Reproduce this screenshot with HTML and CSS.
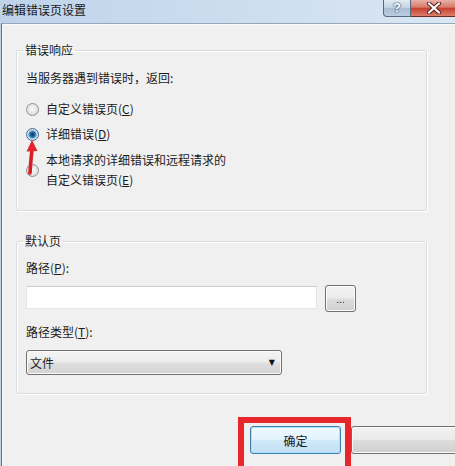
FILE: index.html
```html
<!DOCTYPE html>
<html lang="zh-CN">
<head>
<meta charset="utf-8">
<title>编辑错误页设置</title>
<link rel="stylesheet" href="styles.css">
</head>
<body>
<div class="window">
  <div class="titlebar">
    <div class="title">编辑错误页设置</div>
    <div class="caption-btns">
      <div class="cap-help">?</div>
      <div class="cap-close">
        <svg width="16" height="12" viewBox="0 0 16 12">
          <path d="M3 1.5 L13 10.5 M13 1.5 L3 10.5" stroke="#5a2420" stroke-width="4.2" stroke-linecap="round"/>
          <path d="M3 1.5 L13 10.5 M13 1.5 L3 10.5" stroke="#ffffff" stroke-width="2.2" stroke-linecap="round"/>
        </svg>
      </div>
    </div>
  </div>
  <div class="client">
    <fieldset class="group group-response">
      <legend>错误响应</legend>
      <div class="prompt">当服务器遇到错误时，返回:</div>
      <div class="radio-row row1"><span class="radio"></span><span>自定义错误页(<u>C</u>)</span></div>
      <div class="radio-row row2"><span class="radio checked"></span><span>详细错误(<u>D</u>)</span></div>
      <div class="radio-row row3"><span class="radio"></span><span class="two-line">本地请求的详细错误和远程请求的<br>自定义错误页(<u>E</u>)</span></div>
      <svg class="arrow" width="20" height="40" viewBox="0 0 20 40">
        <path d="M9 34 C9.5 26 10 19 11 11" stroke="#d81e24" stroke-width="3.6" fill="none" stroke-linecap="round"/>
        <polygon points="11,1 16.5,12 5.5,12.5" fill="#e2262b"/>
      </svg>
    </fieldset>
    <fieldset class="group group-default">
      <legend>默认页</legend>
      <div class="label">路径(<u>P</u>):</div>
      <div class="path-row">
        <div class="textbox"></div>
        <div class="btn browse">...</div>
      </div>
      <div class="label label-type">路径类型(<u>T</u>):</div>
      <div class="combo"><span>文件</span><span class="combo-arrow">▼</span></div>
    </fieldset>
    <div class="buttons">
      <div class="ok-wrap">
        <div class="btn ok">确定</div>
        <div class="highlight"></div>
      </div>
      <div class="btn cancel"></div>
    </div>
  </div>
</div>
</body>
</html>
```
FILE: styles.css
```css
html, body {
  margin: 0;
  padding: 0;
}
body {
  width: 455px;
  height: 466px;
  overflow: hidden;
  font-family: "Noto Sans CJK SC", "Liberation Sans", sans-serif;
  font-size: 12px;
  color: #1b1b1b;
  background: #c9dbee;
}
.window {
  display: flex;
  flex-direction: column;
  height: 466px;
  background: linear-gradient(to right, #bed3ea, #cfdff0 60%, #dbe7f3);
}
.titlebar {
  height: 23px;
  display: flex;
  justify-content: space-between;
  align-items: flex-start;
}
.title {
  padding-left: 2px;
  line-height: 20px;
  color: #1a1a1a;
}
.caption-btns {
  display: flex;
  margin-right: -2px;
}
.cap-help {
  width: 26px;
  height: 16px;
  border: 1px solid #56687e;
  border-top: none;
  border-radius: 0 0 0 4px;
  background: linear-gradient(#e3ebf4, #c3d2e3 48%, #a9bdd3 52%, #bccde0);
  color: #fff;
  font-weight: bold;
  font-size: 13px;
  line-height: 16px;
  text-align: center;
  text-shadow: 0 0 2px #26374d, 0 0 1px #26374d;
  font-family: "Liberation Sans", sans-serif;
}
.cap-close {
  width: 46px;
  height: 16px;
  border-bottom: 1px solid #6d2a22;
  background: linear-gradient(#e8b0a6, #d87a6a 45%, #c5402f 52%, #dc7f6c);
  display: flex;
  align-items: center;
  justify-content: center;
}
.client {
  flex: 1;
  margin-left: 1px;
  border-left: 1px solid #5f6f80;
  border-top: 1px solid #93a7bd;
  background: #f0f0f0;
  padding: 19px 28px 0 14px;
  overflow: hidden;
  box-shadow: inset 1px 1px 0 #fbfbfb;
}
.group {
  margin: 0;
  border: 1px solid #d9dcdf;
  border-radius: 2px;
  box-shadow: inset 1px 1px 0 #ffffff, 1px 1px 0 #ffffff;
  padding: 13px 9px 20px 9px;
  position: relative;
}
.group legend {
  padding: 0 2px;
  margin-left: -3px;
  line-height: 14px;
}
.prompt {
  line-height: 16px;
}
.radio-row {
  display: flex;
  align-items: center;
  gap: 7px;
  line-height: 16px;
}
.row1 { margin-top: 15px; }
.row2 { margin-top: 9px; }
.row3 { margin-top: 8px; }
.two-line { line-height: 20px; }
.radio {
  width: 11px;
  height: 11px;
  flex: none;
  border: 1px solid #8f9294;
  border-radius: 50%;
  background: radial-gradient(circle at 50% 45%, #fbfbfb 0, #e9e9e9 45%, #cfd0d1 100%);
}
.radio.checked {
  background: radial-gradient(circle at 50% 50%, #0f3c63 0, #1f5e92 2px, #4c93c9 3.4px, #c9e2f3 4.6px, #eef3f7 100%);
  border-color: #45698a;
}
.arrow {
  position: absolute;
  left: 4px;
  top: 82px;
}
.group-default {
  margin-top: 23px;
  padding: 12px 9px 18px 9px;
}
.label {
  line-height: 16px;
}
.label-type {
  margin-top: 12px;
}
.path-row {
  display: flex;
  align-items: flex-start;
  gap: 8px;
  margin-top: 9px;
}
.textbox {
  width: 289px;
  height: 21px;
  margin-top: 1px;
  background: #ffffff;
  border: 1px solid #e2e6ea;
  border-top-color: #c9ccd0;
}
.btn {
  box-sizing: border-box;
  border: 1px solid #707070;
  border-radius: 3px;
  background: linear-gradient(#f2f2f2, #ebebeb 48%, #dddddd 52%, #cfcfcf);
  box-shadow: inset 0 0 0 1px #fcfcfc;
  display: flex;
  align-items: center;
  justify-content: center;
}
.browse {
  width: 31px;
  height: 27px;
  font-size: 10px;
  line-height: 1;
  padding-top: 3px;
  font-family: "Liberation Sans", sans-serif;
}
.combo {
  box-sizing: border-box;
  width: 256px;
  height: 25px;
  margin-top: 10px;
  border: 1px solid #707070;
  border-radius: 3px;
  background: linear-gradient(#f4f4f4, #ececec 48%, #dfdfdf 52%, #d3d3d3);
  box-shadow: inset 0 0 0 1px #fbfbfb;
  display: flex;
  align-items: center;
  justify-content: space-between;
  padding: 0 6px 0 3px;
}
.combo-arrow {
  font-size: 8px;
  color: #111;
  font-family: "DejaVu Sans", sans-serif;
}
.buttons {
  display: flex;
  gap: 10px;
  margin-top: 32px;
  padding-left: 234px;
}
.ok-wrap {
  position: relative;
  flex: none;
}
.ok {
  width: 91px;
  height: 28px;
  border-color: #3c7fb1;
  background: linear-gradient(#f1f9fe, #e2f3fc 48%, #cfe9f7 52%, #c2e0f2);
  box-shadow: inset 0 0 0 1px #a9e2f8;
  color: #1a1a1a;
}
.highlight {
  position: absolute;
  left: -12px;
  top: -9px;
  width: 101px;
  height: 52px;
  border: 6px solid #e8272d;
}
.cancel {
  flex: none;
  width: 110px;
  height: 28px;
  border-radius: 3px 0 0 3px;
}
```
